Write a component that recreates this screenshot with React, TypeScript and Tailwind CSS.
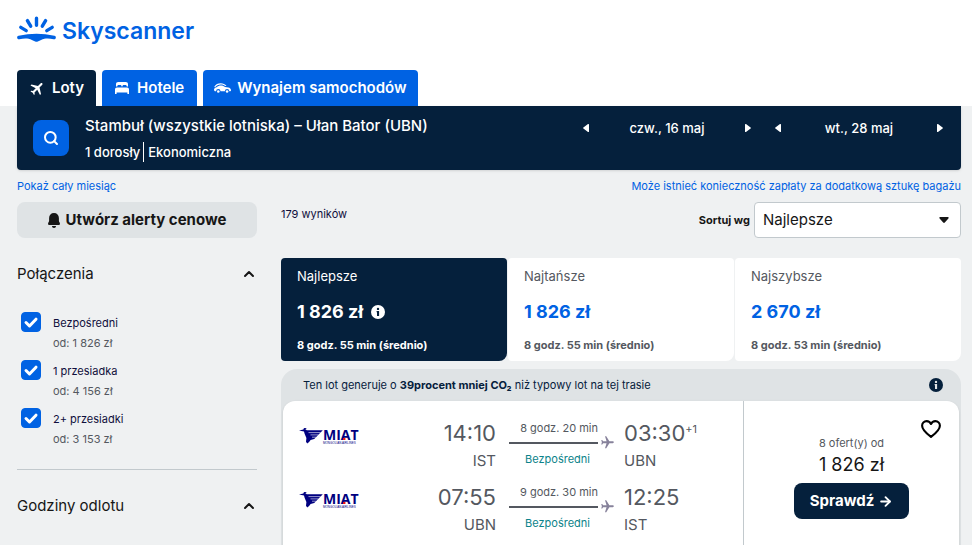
import { useState } from 'react';
import { ArrowRight, ChevronUp, Search } from 'lucide-react';
import { MdFlight } from 'react-icons/md';

const sortOptions = [
  { name: 'Najlepsze', price: '1 826 zł', time: '8 godz. 55 min (średnio)' },
  { name: 'Najtańsze', price: '1 826 zł', time: '8 godz. 55 min (średnio)' },
  { name: 'Najszybsze', price: '2 670 zł', time: '8 godz. 53 min (średnio)' },
];

const stopOptions = [
  { id: 'direct', label: 'Bezpośredni', price: 'od: 1 826 zł' },
  { id: 'one', label: '1 przesiadka', price: 'od: 4 156 zł' },
  { id: 'two', label: '2+ przesiadki', price: 'od: 3 153 zł' },
];

const legs = [
  { from: 'IST', to: 'UBN', depart: '14:10', arrive: '03:30', extra: '+1', duration: '8 godz. 20 min' },
  { from: 'UBN', to: 'IST', depart: '07:55', arrive: '12:25', extra: '', duration: '9 godz. 30 min' },
];

function SunLogo() {
  return (
    <svg width="39" height="26" viewBox="0 0 39 26" fill="none" aria-hidden="true">
      <g stroke="#0062e3" strokeWidth="3.4" strokeLinecap="round">
        <path d="M19.500 2.200v7M10.400 4.600l3.300 5.600M28.600 4.600l-3.300 5.600M3.800 11.400l5.400 3.200M35.200 11.400l-5.400 3.200" />
      </g>
      <path
        d="M1.600 19.800C13.500 17.100 25.500 17.100 37.400 19.800c1.200.3 1.600 1.200 1.400 2.200-.3 1.100-1.100 1.400-2.200 1.200-3.300-.8-6.400-1-9.200-.5-2.500.4-4.200 2.100-6.600 2.800-.9.3-1.700.3-2.600 0-2.400-.7-4.100-2.400-6.600-2.800-2.800-.5-5.900-.3-9.200.5-1.100.2-1.900-.1-2.200-1.200-.2-1 .2-1.900 1.400-2.200z"
        fill="#0062e3"
      />
    </svg>
  );
}

function BedIcon() {
  return (
    <svg width="14" height="12" viewBox="0 0 14 12" fill="currentColor" aria-hidden="true">
      <path d="M1 4.400V2.200C1 .9 1.900 0 3.200 0h7.600C12.100 0 13 .9 13 2.200v2.200h-1.200C11.600 3.500 11 3 10.200 3H8.800c-.7 0-1.200.5-1.400 1.400h-.8C6.400 3.500 5.900 3 5.200 3H3.800C3 3 2.400 3.500 2.200 4.400z" />
      <path d="M2 5.400h10c1.200 0 2 .8 2 2V12h-1.600v-1.600H1.600V12H0V7.400c0-1.200.8-2 2-2z" />
    </svg>
  );
}

function CarIcon() {
  return (
    <svg width="17" height="10" viewBox="0 0 17 10" fill="currentColor" aria-hidden="true">
      <path d="M.2 3.900C1.700 1.300 4 .2 6.700.2c2.500 0 4.300 1 5.800 2.600l-1.100.3C10.200 2 8.800 1.400 6.800 1.400 4.400 1.400 2.400 2.400 1 4.300z" />
      <path d="M2.600 4.300C3.800 3.200 5.200 2.600 7 2.600c1.600 0 2.900.6 4.100 1.500l3.200.5c1.600.3 2.700 1.300 2.700 2.700 0 .6-.4 1-1.100 1h-.6a2.200 2.200 0 0 0-4.400 0H6.500a2.200 2.200 0 0 0-4.400 0h-.6C.6 8.300 0 7.700 0 6.800c0-1.300 1.100-2.200 2.600-2.500z" />
      <circle cx="4.300" cy="8.500" r="1.300" />
      <circle cx="13.100" cy="8.500" r="1.300" />
    </svg>
  );
}

function BellIcon() {
  return (
    <svg width="12" height="15" viewBox="0 0 12 15" fill="currentColor" aria-hidden="true">
      <path d="M6 0c3 0 4.900 2 4.900 5v2.600c0 .9.200 1.300.7 2 .7 1 .3 2.400-1.100 2.400h-9C.1 12-.3 10.600.4 9.600c.5-.7.700-1.100.7-2V5C1.100 2 3 0 6 0z" />
      <path d="M4 13h4c0 1.200-.8 2-2 2s-2-.8-2-2z" />
    </svg>
  );
}

function HeartIcon() {
  return (
    <svg width="20" height="18" viewBox="0 0 20 18" fill="none" aria-hidden="true">
      <path
        d="M10 16.900C6.500 14.300 1.100 10.200 1.100 5.800 1.100 3.100 3.100 1.100 5.600 1.100 7.500 1.100 9.200 2.200 10 4c.8-1.800 2.500-2.900 4.400-2.900 2.500 0 4.500 2 4.500 4.700 0 4.400-5.400 8.500-8.900 11.100z"
        stroke="currentColor"
        strokeWidth="2.100"
        strokeLinejoin="round"
      />
    </svg>
  );
}

function InfoIcon({ dot }: { dot: string }) {
  return (
    <svg width="14" height="14" viewBox="0 0 14 14" aria-hidden="true">
      <circle cx="7" cy="7" r="7" fill="currentColor" />
      <g fill={dot}>
        <circle cx="7" cy="3.900" r="1.200" />
        <path d="M5.600 5.900h2.500v5H6V7.300h-.4z" />
      </g>
    </svg>
  );
}

function Triangle({ direction }: { direction: 'left' | 'right' }) {
  return (
    <svg width="6" height="10" viewBox="0 0 6 10" fill="currentColor" aria-hidden="true">
      {direction === 'left' ? (
        <path d="M6 1.500v7c0 .6-.6.8-1 .4L.4 5.600a.8.8 0 0 1 0-1.200L5 1.100c.4-.4 1-.2 1 .4z" />
      ) : (
        <path d="M0 1.500v7c0 .6.6.8 1 .4l4.600-3.300a.8.8 0 0 0 0-1.200L1 1.100c-.4-.4-1-.2-1 .4z" />
      )}
    </svg>
  );
}

function MiatLogo() {
  return (
    <svg width="62" height="24" viewBox="0 0 62 24" role="img" aria-label="MIAT Mongolian Airlines">
      <path
        d="M0 7.400l4.400-1C4.600 5 6.200 4.600 7.800 5.400l-1.600.6 1.600 1.300h16l-8.600 8.600-3.600 1.200-1.500 1.900L8.200 20.500l-1.200-1.800.4-3.800-1.800-4.100L5 8.500z"
        fill="#000080"
      />
      <path d="M9.500 9.600h12M11.500 11.900h8M13 14.200h4" stroke="#fff" strokeWidth=".6" />
      <text x="24" y="17" fill="#000080" fontFamily="'Open Sans', sans-serif" fontWeight="700" fontSize="14">
        MIAT
      </text>
      <path d="M44 15h2.400v2H44z" fill="#f01010" />
      <text x="24" y="21" fill="#000080" fontFamily="'Liberation Sans', sans-serif" fontSize="3">
        MONGOLIAN AIRLINES
      </text>
    </svg>
  );
}

function DateStepper({ label, name }: { label: string; name: string }) {
  return (
    <div className="flex w-[168px] items-center justify-between">
      <button type="button" aria-label={`${name}: poprzedni dzień`} className="flex">
        <Triangle direction="left" />
      </button>
      <span className="text-[13px] leading-5 font-medium">{label}</span>
      <button type="button" aria-label={`${name}: następny dzień`} className="flex">
        <Triangle direction="right" />
      </button>
    </div>
  );
}

function SectionTitle({ title }: { title: string }) {
  return (
    <button type="button" className="flex h-6 w-full items-center justify-between text-[15px] text-[#161616]">
      {title}
      <ChevronUp size={16} strokeWidth={3} />
    </button>
  );
}

function Leg({ leg }: { leg: (typeof legs)[number] }) {
  return (
    <div className="flex h-16 items-start text-[#545860]">
      <div className="pt-1">
        <MiatLogo />
      </div>
      <div className="flex flex-1 flex-col items-end">
        <span className="text-[22px] leading-7">{leg.depart}</span>
        <span className="text-[15px] leading-7">{leg.from}</span>
      </div>
      <div className="ml-[13px] w-[89px] text-[11px] leading-4">
        <div className="pt-px text-right whitespace-nowrap">{leg.duration}</div>
        <div className="mt-1.5 mb-[7px] h-0.5 bg-[#545860]" />
        <div className="pl-2 text-center text-[#0c838a]">Bezpośredni</div>
      </div>
      <MdFlight size={15} className="mt-4 ml-[2px] rotate-90 text-[#87829b]" />
      <div className="ml-[9px] w-[119px]">
        <div className="flex items-start">
          <span className="text-[22px] leading-7">{leg.arrive}</span>
          {leg.extra && <span className="text-[11px] leading-5">{leg.extra}</span>}
        </div>
        <div className="text-[15px] leading-7">{leg.to}</div>
      </div>
    </div>
  );
}

export default function App() {
  const [checked, setChecked] = useState<Record<string, boolean>>({ direct: true, one: true, two: true });
  const [active, setActive] = useState('Najlepsze');

  return (
    <div className="min-h-screen bg-[#eff1f2] font-['Inter',sans-serif] text-[#161616]">
      <header className="bg-white pr-[11px] pl-[17px]">
        <a href="#" className="flex h-[70px] items-start gap-1.5 pt-4 text-[#0062e3]">
          <SunLogo />
          <span className="text-[23px] leading-[30px] font-semibold">Skyscanner</span>
        </a>
        <nav className="flex gap-1.5 text-[15px] font-semibold text-white">
          <a href="#" className="flex h-9 items-center gap-1.5 rounded-t bg-[#05203c] px-3">
            <MdFlight size={17} className="rotate-45" />
            Loty
          </a>
          <a href="#" className="flex h-9 items-center gap-2 rounded-t bg-[#0062e3] px-[13px]">
            <BedIcon />
            Hotele
          </a>
          <a href="#" className="flex h-9 items-center gap-1.5 rounded-t bg-[#0062e3] px-[11px]">
            <CarIcon />
            Wynajem samochodów
          </a>
        </nav>
      </header>

      <main className="pr-[11px] pl-[17px]">
        <section className="flex h-16 rounded-b bg-[#05203c] pr-[18px] pl-4 text-white shadow-sm">
          <button
            type="button"
            aria-label="Szukaj"
            className="mt-3.5 flex size-9 items-center justify-center rounded-lg bg-[#0062e3]"
          >
            <Search size={16} strokeWidth={3} />
          </button>
          <div className="ml-4 flex-1 pt-2">
            <div className="text-[15px] leading-6 font-medium">Stambuł (wszystkie lotniska) – Ułan Bator (UBN)</div>
            <div className="mt-1 flex text-[13px] leading-5 font-medium">
              <span className="border-r border-white pr-[3px]">1 dorosły</span>
              <span className="pl-1">Ekonomiczna</span>
            </div>
          </div>
          <div className="flex h-11 gap-6">
            <DateStepper label="czw., 16 maj" name="Wylot" />
            <DateStepper label="wt., 28 maj" name="Powrót" />
          </div>
        </section>

        <div className="flex h-8 items-center justify-between text-[11px] text-[#0062e3]">
          <a href="#">Pokaż cały miesiąc</a>
          <a href="#">Może istnieć konieczność zapłaty za dodatkową sztukę bagażu</a>
        </div>

        <div className="flex gap-6">
          <aside className="w-60 shrink-0">
            <button
              type="button"
              className="flex h-9 w-full items-center justify-center gap-1.5 rounded-lg bg-[#dfe3e5] text-[15px] font-bold"
            >
              <BellIcon />
              Utwórz alerty cenowe
            </button>

            <section className="mt-6 border-b border-[#c2c9cd] pb-[13px]">
              <SectionTitle title="Połączenia" />
              <div className="mt-[26px]">
                {stopOptions.map((option) => (
                  <label key={option.id} className="flex h-12 gap-3 pl-1">
                    <span className="relative size-5">
                      <input
                        type="checkbox"
                        checked={checked[option.id]}
                        onChange={() => setChecked({ ...checked, [option.id]: !checked[option.id] })}
                        className="block size-5 appearance-none rounded border border-[#0062e3] checked:bg-[#0062e3]"
                      />
                      {checked[option.id] && (
                        <svg viewBox="0 0 20 20" className="pointer-events-none absolute inset-0" aria-hidden="true">
                          <path
                            d="M5 10.500 8.500 14 15 7.200"
                            fill="none"
                            stroke="#fff"
                            strokeWidth="3"
                            strokeLinecap="round"
                            strokeLinejoin="round"
                          />
                        </svg>
                      )}
                    </span>
                    <span className="pt-px text-[11px] leading-5">
                      <span className="block text-[#0f0f3c]">{option.label}</span>
                      <span className="block text-[#545860]">{option.price}</span>
                    </span>
                  </label>
                ))}
              </div>
            </section>

            <section className="pt-6">
              <SectionTitle title="Godziny odlotu" />
            </section>
          </aside>

          <div className="min-w-0 flex-1">
            <div className="flex h-9 items-center justify-between text-[11px]">
              <span className="pb-3 text-[#0f0f3c]">179 wyników</span>
              <div className="flex items-center gap-1">
                <label htmlFor="sort" className="font-bold">
                  Sortuj wg
                </label>
                <div className="relative">
                  <select
                    id="sort"
                    value={active}
                    onChange={(event) => setActive(event.target.value)}
                    className="h-9 w-[207px] appearance-none rounded border border-[#c2c9cd] bg-white pl-2 text-[15px]"
                  >
                    {sortOptions.map((option) => (
                      <option key={option.name}>{option.name}</option>
                    ))}
                  </select>
                  <svg
                    width="10"
                    height="6"
                    viewBox="0 0 10 6"
                    className="pointer-events-none absolute top-[15px] right-3"
                    aria-hidden="true"
                  >
                    <path
                      d="M1.200 0h7.600c.9 0 1.200.8.6 1.400L5.800 5.600c-.5.5-1.100.5-1.600 0L.6 1.400C0 .8.3 0 1.200 0z"
                      fill="#161616"
                    />
                  </svg>
                </div>
              </div>
            </div>

            <div className="mt-5 grid grid-cols-3 gap-px">
              {sortOptions.map((option) => {
                const selected = option.name === active;
                return (
                  <button
                    type="button"
                    key={option.name}
                    onClick={() => setActive(option.name)}
                    className={`flex h-[103px] flex-col justify-start rounded rounded-br-lg px-4 pt-2 text-left ${
                      selected ? 'bg-[#05203c] text-white' : 'bg-white text-[#545860]'
                    }`}
                  >
                    <span className="text-[13px] leading-5">{option.name}</span>
                    <span
                      className={`mt-3 flex items-center gap-2 text-lg leading-7 font-bold ${
                        selected ? 'text-white' : 'text-[#0062e3]'
                      }`}
                    >
                      {option.price}
                      {selected && <InfoIcon dot="#05203c" />}
                    </span>
                    <span className="mt-[11px] text-[11px] leading-4 font-bold">{option.time}</span>
                  </button>
                );
              })}
            </div>

            <article className="mt-2 rounded-2xl bg-[#dfe3e5] px-0.5 pb-0.5">
              <div className="flex h-8 items-center justify-between pr-4 pl-5 text-[11px] text-[#05203c]">
                <p>
                  Ten lot generuje o <b>39procent mniej CO₂</b> niż typowy lot na tej trasie
                </p>
                <button type="button" aria-label="Informacje o emisji" className="flex">
                  <InfoIcon dot="#dfe3e5" />
                </button>
              </div>
              <div className="flex min-h-40 rounded-xl bg-white shadow">
                <div className="flex-1 pt-[18px] pl-4">
                  {legs.map((leg) => (
                    <Leg key={leg.from} leg={leg} />
                  ))}
                </div>
                <div className="relative flex w-[216px] flex-col items-center border-l border-[#c2c9cd] pt-8">
                  <button type="button" aria-label="Zapisz" className="absolute top-[19px] right-[18px] text-black">
                    <HeartIcon />
                  </button>
                  <span className="text-[11px] leading-5 text-[#545860]">8 ofert(y) od</span>
                  <span className="text-lg leading-6">1 826 zł</span>
                  <button
                    type="button"
                    className="mt-1.5 flex h-9 items-center gap-1 rounded-lg bg-[#05203c] px-4 text-[15px] font-bold text-white"
                  >
                    Sprawdź
                    <ArrowRight size={15} strokeWidth={3} />
                  </button>
                </div>
              </div>
            </article>
          </div>
        </div>
      </main>
    </div>
  );
}
